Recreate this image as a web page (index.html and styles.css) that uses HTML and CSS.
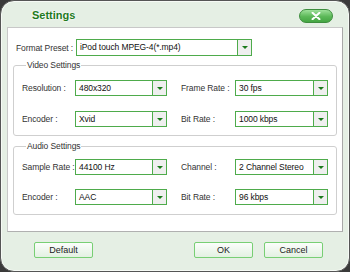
FILE: index.html
```html
<!DOCTYPE html>
<html lang="en">
<head>
    <meta charset="UTF-8">
    <title>Settings</title>
    <link rel="stylesheet" href="styles.css">
</head>
<body>
    <div class="dialog">
        <div class="titlebar">
            <span class="title">Settings</span>
            <button class="close" title="Close">
                <svg width="10" height="8" viewBox="0 0 10 8"><path d="M1.5 0.8 L8.5 7.2 M8.5 0.8 L1.5 7.2" stroke="#fff" stroke-width="2" stroke-linecap="round"/></svg>
            </button>
        </div>

        <div class="panel">
            <div class="preset-row">
                <label>Format Preset :</label>
                <div class="combo combo-wide"><span class="value">iPod touch MPEG-4(*.mp4)</span><span class="arrow"></span></div>
            </div>

            <fieldset class="group">
                <legend>Video Settings</legend>
                <div class="grid">
                    <label>Resolution :</label>
                    <div class="combo"><span class="value">480x320</span><span class="arrow"></span></div>
                    <span></span>
                    <label>Frame Rate :</label>
                    <div class="combo"><span class="value">30 fps</span><span class="arrow"></span></div>

                    <label>Encoder :</label>
                    <div class="combo"><span class="value">Xvid</span><span class="arrow"></span></div>
                    <span></span>
                    <label>Bit Rate :</label>
                    <div class="combo"><span class="value">1000 kbps</span><span class="arrow"></span></div>
                </div>
            </fieldset>

            <fieldset class="group audio">
                <legend>Audio Settings</legend>
                <div class="grid">
                    <label>Sample Rate :</label>
                    <div class="combo"><span class="value">44100 Hz</span><span class="arrow"></span></div>
                    <span></span>
                    <label>Channel :</label>
                    <div class="combo"><span class="value">2 Channel Stereo</span><span class="arrow"></span></div>

                    <label>Encoder :</label>
                    <div class="combo"><span class="value">AAC</span><span class="arrow"></span></div>
                    <span></span>
                    <label>Bit Rate :</label>
                    <div class="combo"><span class="value">96 kbps</span><span class="arrow"></span></div>
                </div>
            </fieldset>
        </div>

        <div class="footer">
            <button class="btn">Default</button>
            <div class="right">
                <button class="btn">OK</button>
                <button class="btn">Cancel</button>
            </div>
        </div>
    </div>
</body>
</html>
```

FILE: styles.css
```css
body {
    margin: 0;
    background: #3a3a3a;
    font-family: "Liberation Sans", Arial, sans-serif;
    font-size: 8.5px;
    letter-spacing: -0.1px;
    color: #333;
}
label {
    white-space: nowrap;
}
.dialog {
    box-sizing: border-box;
    width: 350px;
    height: 272px;
    border: 1px solid #555;
    border-radius: 14px;
    background: #e5efe4;
    box-shadow: inset 0 0 0 1px #f6faf5;
}
.titlebar {
    height: 26px;
    display: flex;
    align-items: center;
    justify-content: space-between;
    padding: 0 16px 0 31px;
    box-sizing: border-box;
}
.title {
    font-size: 11px;
    font-weight: bold;
    letter-spacing: 0;
    color: #1f7a22;
    text-shadow: 0 0 3px #fff, 0 0 2px #fff;
    margin-top: 1px;
}
.close {
    width: 34px;
    height: 14px;
    border: 1px solid #3d8d3d;
    border-radius: 8px;
    background: linear-gradient(#9ee09a, #5cb858 55%, #45a643);
    padding: 0;
    display: flex;
    align-items: center;
    justify-content: center;
    margin-top: 3px;
}
.panel {
    margin: 0 6px 0 6px;
    height: 205px;
    box-sizing: border-box;
    background: #fff;
    border: 1px solid #c8c8c8;
    border-right-color: #a8a8a8;
    border-bottom-color: #b0b0b0;
    padding: 11px 5px 0 5px;
}
.preset-row {
    display: flex;
    align-items: center;
    padding-left: 3px;
}
.preset-row label {
    width: 60px;
}
.combo {
    box-sizing: border-box;
    height: 16px;
    border: 1px solid #4eab4b;
    display: flex;
    background: #fff;
    color: #111;
}
.combo-wide {
    width: 176px;
    height: 17px;
}
.value {
    flex: 1;
    padding-left: 3px;
    line-height: 14px;
    font-size: 8.5px;
    white-space: nowrap;
    overflow: hidden;
}
.combo-wide .value {
    line-height: 15px;
}
.arrow {
    width: 13px;
    border-left: 1px solid #4eab4b;
    background: #efefef;
    display: flex;
    align-items: center;
    justify-content: center;
}
.arrow::after {
    content: "";
    border-left: 3px solid transparent;
    border-right: 3px solid transparent;
    border-top: 3px solid #1b7a1b;
}
.group {
    margin: 3px 0 0 0;
    border: 1px solid #cfcfcf;
    border-radius: 3px;
    padding: 9px 8px 8px 8px;
}
.group legend {
    padding: 0 1px;
    margin-left: 4px;
    line-height: 12px;
    color: #333;
}
.audio {
    margin-top: 4px;
    padding-top: 7px;
    padding-bottom: 9px;
}
.grid {
    display: grid;
    grid-template-columns: 53px 92px 14px 54px 93px;
    grid-auto-rows: 16px;
    row-gap: 15px;
    align-items: center;
}
.audio .grid {
    row-gap: 14px;
}
.footer {
    display: flex;
    justify-content: space-between;
    padding: 10px 26px 0 33px;
}
.right {
    display: flex;
    gap: 11px;
}
.btn {
    width: 59px;
    height: 16px;
    padding: 0;
    border: 1px solid #78cf74;
    border-radius: 2px;
    background: linear-gradient(#fbfdfb, #e3f1e2);
    font-family: "Liberation Sans", Arial, sans-serif;
    font-size: 9px;
    color: #222;
}
```
